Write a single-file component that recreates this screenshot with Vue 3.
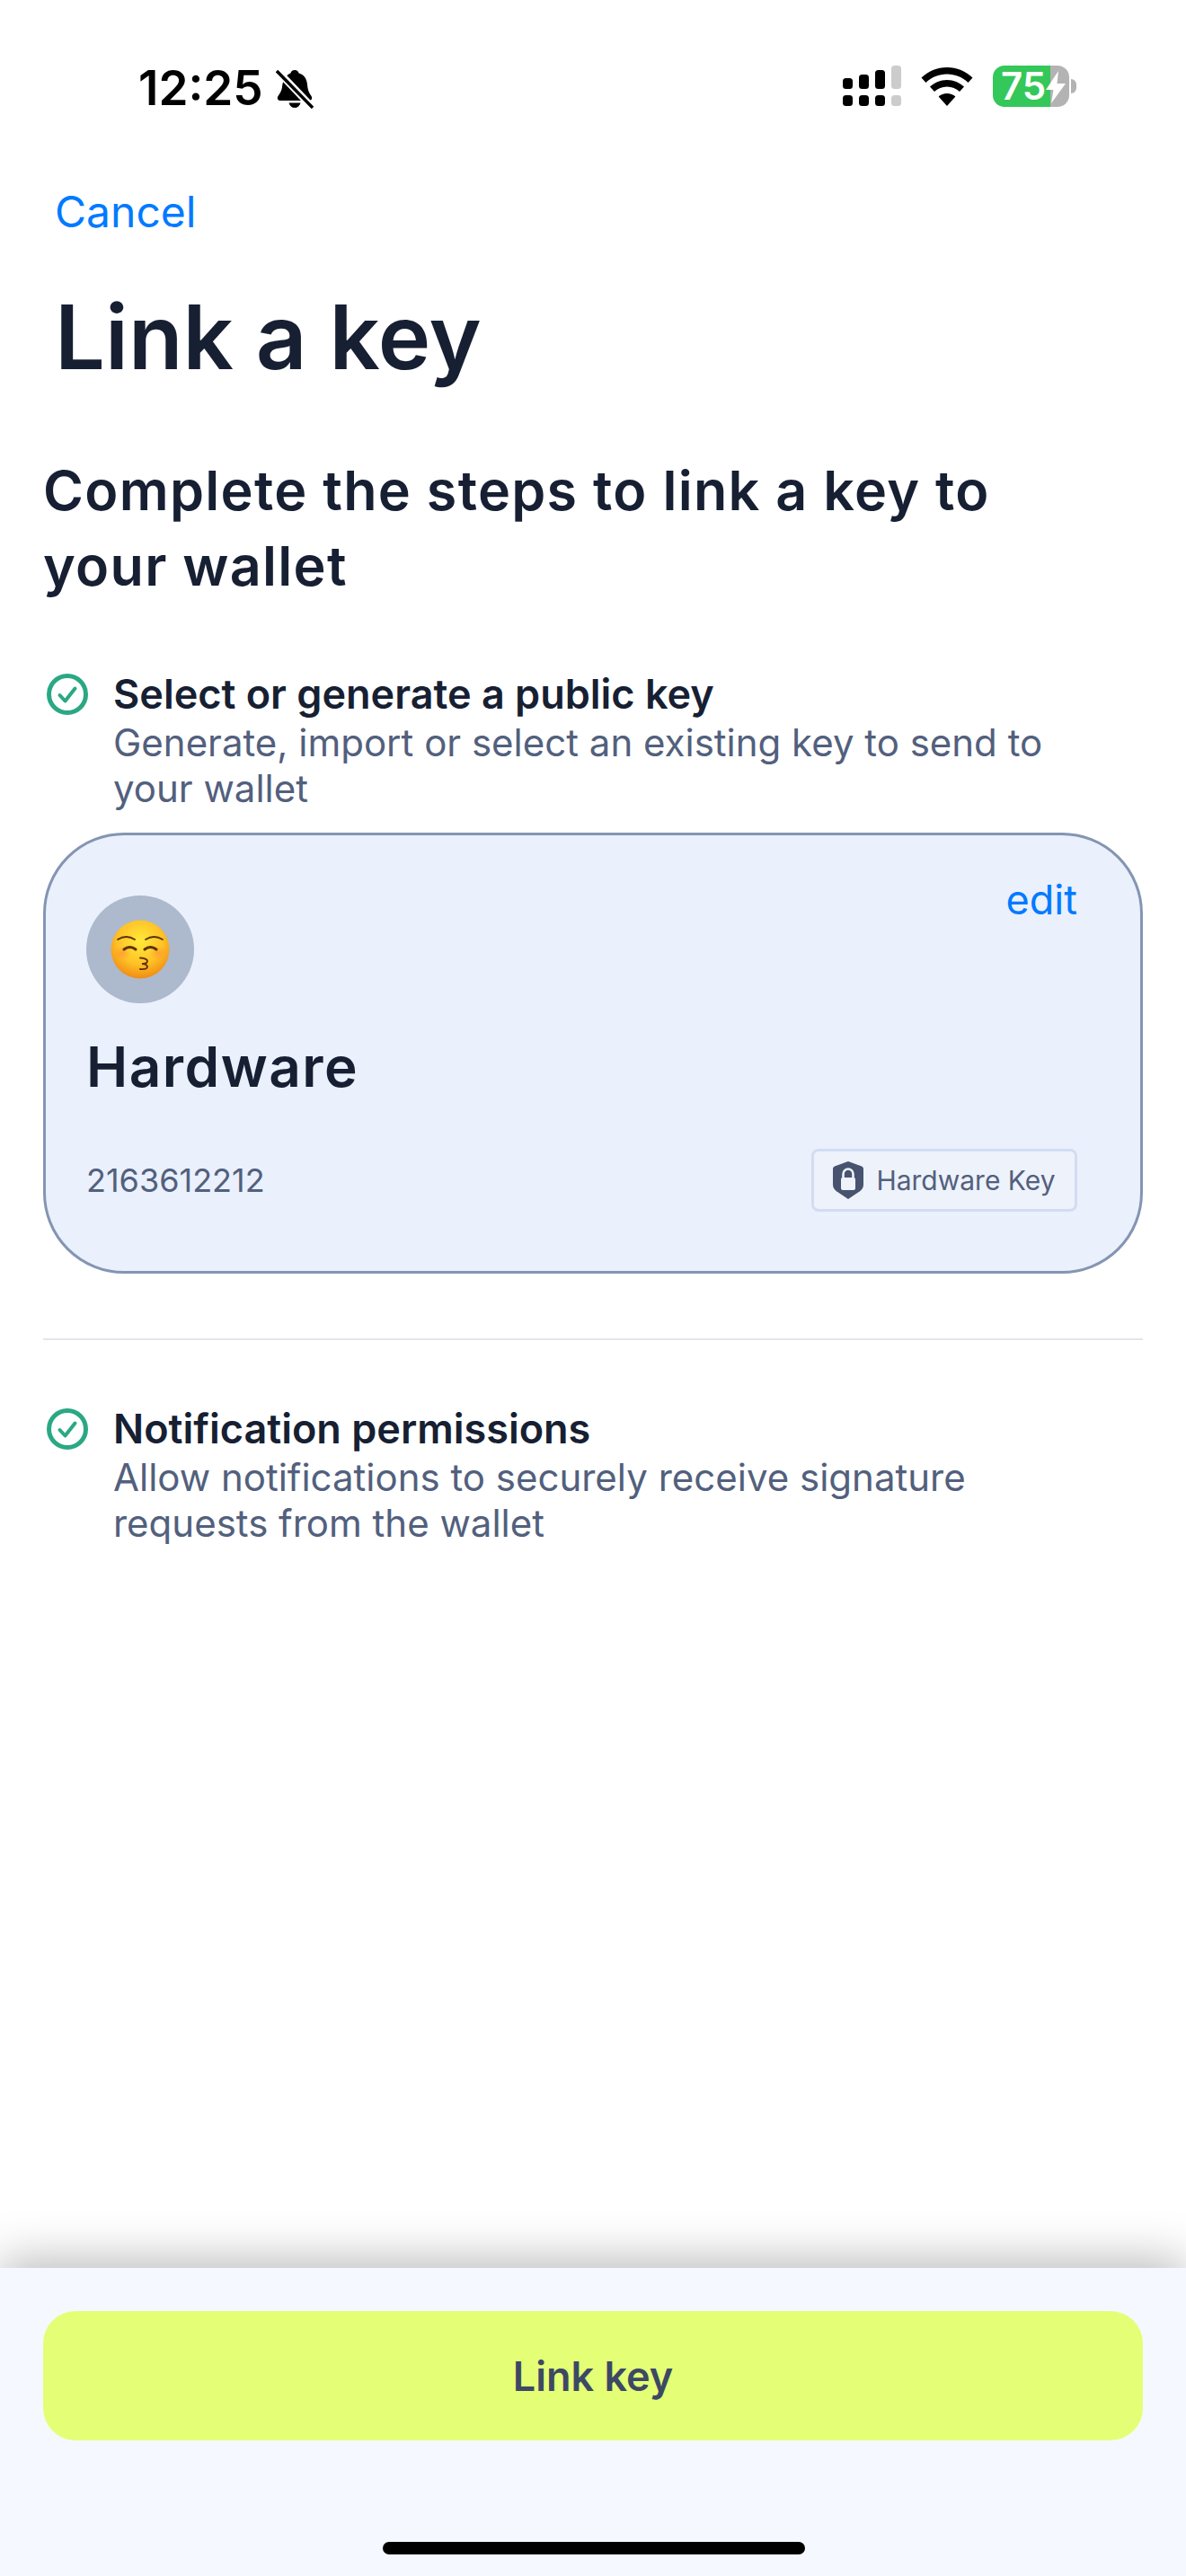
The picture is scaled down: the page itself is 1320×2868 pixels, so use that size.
<template>
  <div class="screen">
    <div class="status-bar">
      <div class="status-left">
        <span class="time">12:25</span>
        <svg class="bell" viewBox="0 0 42 44" width="42" height="44">
          <path d="M21 1c2.600 0 4.200 1.700 4.600 3.600C31.500 6.300 34.500 11 35 17c.4 5.500 1.500 9 4.200 12.400 2 2.600.8 5.600-2.400 5.600H5.200c-3.200 0-4.400-3-2.400-5.600C5 26.500 6.400 24 7 20c.7-7 4-13.400 9.400-15.400C16.800 2.700 18.400 1 21 1z" fill="#000" />
          <path d="M14.500 37.500h13c-.8 3.500-3.400 5.500-6.500 5.500s-5.700-2-6.500-5.500z" fill="#000" />
          <path d="M0 0l42 44" stroke="#fff" stroke-width="8" />
          <path d="M1 2l40 41" stroke="#000" stroke-width="3.400" />
        </svg>
      </div>
      <div class="status-right">
        <svg viewBox="0 0 66 46" width="66" height="46">
          <rect v-for="bar in signalBars" :key="bar.x" :x="bar.x" :y="bar.y" width="11" :height="26 - bar.y" rx="3.500" :fill="bar.fill" />
          <rect v-for="bar in signalBars" :key="'low' + bar.x" :x="bar.x" y="33" width="11" height="12" rx="3.500" :fill="bar.fill" />
        </svg>
        <svg class="wifi" viewBox="0 0 58 44" width="58" height="44">
          <path d="M29 0c11 0 21 4.300 28.500 11.500l-5 5.500C46.300 11 38 7.500 29 7.500S11.700 11 5.500 17l-5-5.500C8 4.300 18 0 29 0z" fill="#000" />
          <path d="M29 14c7.400 0 14 2.900 19 7.600l-5 5.500c-3.700-3.400-8.600-5.500-14-5.500s-10.300 2.100-14 5.500l-5-5.500C15 16.900 21.600 14 29 14z" fill="#000" />
          <path d="M29 29c3.600 0 6.900 1.300 9.400 3.600L29 43 19.600 32.600C22.100 30.300 25.400 29 29 29z" fill="#000" />
        </svg>
        <div class="battery">
          <div class="battery-body">
            <span class="battery-level">75</span>
            <svg class="bolt" viewBox="0 0 22 36" width="22" height="36">
              <path d="M14 0L0 21h8.500L6 36l16-22h-9.500z" fill="#fff" />
            </svg>
          </div>
          <div class="battery-tip"></div>
        </div>
      </div>
    </div>

    <div class="nav">
      <span class="cancel">Cancel</span>
      <h1 class="title">Link a key</h1>
    </div>

    <main class="content">
      <h2 class="heading">Complete the steps to link a key to your wallet</h2>

      <div class="step step-first">
        <svg class="check" viewBox="0 0 46 46" width="46" height="46">
          <circle cx="23" cy="23" r="20.500" fill="none" stroke="#2aa884" stroke-width="5" />
          <path d="M14.500 24l6 6.500L31.500 16.500" fill="none" stroke="#2aa884" stroke-width="4" stroke-linecap="round" stroke-linejoin="round" />
        </svg>
        <div class="step-text">
          <div class="step-title">Select or generate a public key</div>
          <div class="step-sub">Generate, import or select an existing key to send to your wallet</div>
        </div>
      </div>

      <div class="card">
        <div class="card-top">
          <div class="avatar">
            <svg viewBox="0 0 66 66" width="66" height="66">
              <defs>
                <radialGradient id="face" cx="50%" cy="36%" r="65%">
                  <stop offset="0%" stop-color="#ffe93a" />
                  <stop offset="60%" stop-color="#ffc227" />
                  <stop offset="100%" stop-color="#f08a12" />
                </radialGradient>
                <radialGradient id="cheek" cx="50%" cy="50%" r="50%">
                  <stop offset="0%" stop-color="#ff7a3c" stop-opacity="0.45" />
                  <stop offset="100%" stop-color="#ff7a3c" stop-opacity="0" />
                </radialGradient>
              </defs>
              <circle cx="33" cy="33" r="32.500" fill="url(#face)" />
              <ellipse cx="13" cy="37" rx="10" ry="8" fill="url(#cheek)" />
              <ellipse cx="53" cy="37" rx="10" ry="8" fill="url(#cheek)" />
              <g fill="none" stroke="#5b3208" stroke-linecap="round">
                <path d="M8 22q9.500-6 19 0" stroke-width="1.800" />
                <path d="M39 22q9.500-6 19 0" stroke-width="1.800" />
                <path d="M15 33q6.500-5 13 0" stroke-width="3" />
                <path d="M38 33q6.500-5 13 0" stroke-width="3" />
                <path d="M33 42.500q8 .5 8 3.500t-6 3q6 .5 6 3.500t-8 2.500" stroke-width="1.800" />
              </g>
            </svg>
          </div>
          <span class="edit">edit</span>
        </div>
        <div class="card-name">Hardware</div>
        <div class="card-bottom">
          <span class="card-number">2163612212</span>
          <div class="badge">
            <svg viewBox="0 0 34 42" width="34" height="42">
              <path d="M17 0l15 5.500c1.200.5 2 1.500 2 3V26c0 3-1.500 5.500-4 7.200L17 42 4 33.200C1.500 31.500 0 29 0 26V8.500c0-1.500.8-2.500 2-3z" fill="#47536f" />
              <rect x="9" y="18" width="16" height="14" rx="2" fill="#eef2fb" />
              <path d="M11.500 19v-5a5.500 5.500 0 0 1 11 0v5" fill="none" stroke="#eef2fb" stroke-width="2.600" />
            </svg>
            <span>Hardware Key</span>
          </div>
        </div>
      </div>

      <div class="divider"></div>

      <div class="step step-second">
        <svg class="check" viewBox="0 0 46 46" width="46" height="46">
          <circle cx="23" cy="23" r="20.500" fill="none" stroke="#2aa884" stroke-width="5" />
          <path d="M14.500 24l6 6.500L31.500 16.500" fill="none" stroke="#2aa884" stroke-width="4" stroke-linecap="round" stroke-linejoin="round" />
        </svg>
        <div class="step-text">
          <div class="step-title">Notification permissions</div>
          <div class="step-sub">Allow notifications to securely receive signature requests from the wallet</div>
        </div>
      </div>
    </main>

    <footer class="footer">
      <button class="link-btn">Link key</button>
      <div class="home-bar"></div>
    </footer>
  </div>
</template>

<script setup>
const signalBars = [
  { x: 1, y: 14, fill: '#000' },
  { x: 19, y: 10, fill: '#000' },
  { x: 37, y: 5, fill: '#000' },
  { x: 55, y: 0, fill: '#ccc' },
]
</script>

<style>
body {
  margin: 0;
  background: #fff;
}
</style>

<style scoped>
.screen {
  width: 1320px;
  height: 2868px;
  display: flex;
  flex-direction: column;
  background: #fff;
  font-family: Inter, "Liberation Sans", sans-serif;
  overflow: hidden;
}

.status-bar {
  height: 206px;
  box-sizing: border-box;
  padding: 73px 122px 0 154px;
  display: flex;
  justify-content: space-between;
  align-items: flex-start;
  flex-shrink: 0;
}

.status-left {
  display: flex;
  align-items: center;
  gap: 14px;
}

.time {
  font-size: 53px;
  font-weight: 600;
  line-height: 50px;
  color: #000;
}

.bell {
  margin-top: 2px;
}

.status-right {
  display: flex;
  align-items: flex-start;
  gap: 22px;
}

.wifi {
  margin-top: 2px;
}

.battery {
  display: flex;
  align-items: center;
  gap: 2px;
}

.battery-body {
  position: relative;
  width: 85px;
  height: 46px;
  border-radius: 13px;
  background: linear-gradient(90deg, #34c759 0, #34c759 64px, #b3b3b3 64px);
  display: flex;
  align-items: center;
  padding-left: 9px;
  box-sizing: border-box;
}

.battery-level {
  font-size: 42px;
  font-weight: 600;
  line-height: 46px;
  color: #fff;
}

.bolt {
  position: absolute;
  left: 59px;
  top: 6px;
}

.battery-tip {
  width: 6px;
  height: 16px;
  background: #b3b3b3;
  border-radius: 0 8px 8px 0;
}

.nav {
  padding: 0 61px;
  flex-shrink: 0;
}

.cancel {
  display: block;
  font-size: 48px;
  line-height: 60px;
  color: #007aff;
}

.title {
  margin: 53px 0 0;
  font-size: 99px;
  font-weight: 600;
  line-height: 112px;
  color: #171f33;
}

.content {
  flex: 1;
  padding: 0 48px;
}

.heading {
  max-width: 1120px;
  margin: 73px 0 0;
  font-size: 61px;
  font-weight: 600;
  letter-spacing: 1.300px;
  line-height: 84px;
  color: #171f33;
}

.step {
  display: flex;
  align-items: flex-start;
  gap: 28px;
  padding-left: 4px;
}

.step-first {
  margin-top: 75px;
}

.step-second {
  margin-top: 73px;
}

.step-text {
  max-width: 1090px;
}

.check {
  flex-shrink: 0;
  margin-top: 3px;
}

.step-title {
  font-size: 45px;
  font-weight: 600;
  line-height: 52px;
  color: #171f33;
}

.step-sub {
  margin-top: 2px;
  font-size: 42px;
  line-height: 51px;
  color: #52607d;
}

.card {
  margin-top: 24px;
  height: 491px;
  box-sizing: border-box;
  padding: 67px 70px 0 45px;
  background: #eaf0fc;
  border: 3px solid #8495b3;
  border-radius: 90px;
}

.card-top {
  display: flex;
  justify-content: space-between;
  align-items: flex-start;
}

.avatar {
  width: 120px;
  height: 120px;
  border-radius: 50%;
  background: #adb9cc;
  display: flex;
  align-items: center;
  justify-content: center;
}

.edit {
  margin-top: -25px;
  font-size: 45px;
  line-height: 60px;
  color: #007aff;
}

.card-name {
  margin-top: 39px;
  font-size: 62px;
  font-weight: 600;
  letter-spacing: 1.500px;
  line-height: 64px;
  color: #171f33;
}

.card-bottom {
  margin-top: 59px;
  display: flex;
  justify-content: space-between;
  align-items: center;
}

.card-number {
  font-size: 36px;
  color: #52607d;
}

.badge {
  width: 296px;
  height: 70px;
  box-sizing: border-box;
  border: 3px solid #d2ddf2;
  border-radius: 8px;
  background: #eef2fb;
  display: flex;
  align-items: center;
  justify-content: center;
  gap: 14px;
  font-size: 30px;
  color: #52607d;
}

.divider {
  margin-top: 72px;
  height: 2px;
  background: #e3e6ea;
}

.footer {
  position: relative;
  height: 343px;
  box-sizing: border-box;
  padding: 48px 48px 0;
  background: #f5f8ff;
  flex-shrink: 0;
  box-shadow: 0 -8px 50px rgba(0, 0, 0, 0.28);
}

.link-btn {
  display: block;
  width: 100%;
  height: 144px;
  border: 0;
  border-radius: 36px;
  background: #e4ff75;
  font-family: inherit;
  font-size: 45px;
  font-weight: 600;
  color: #3d4864;
}

.home-bar {
  position: absolute;
  left: 426px;
  bottom: 24px;
  width: 470px;
  height: 14px;
  border-radius: 7px;
  background: #000;
}
</style>
